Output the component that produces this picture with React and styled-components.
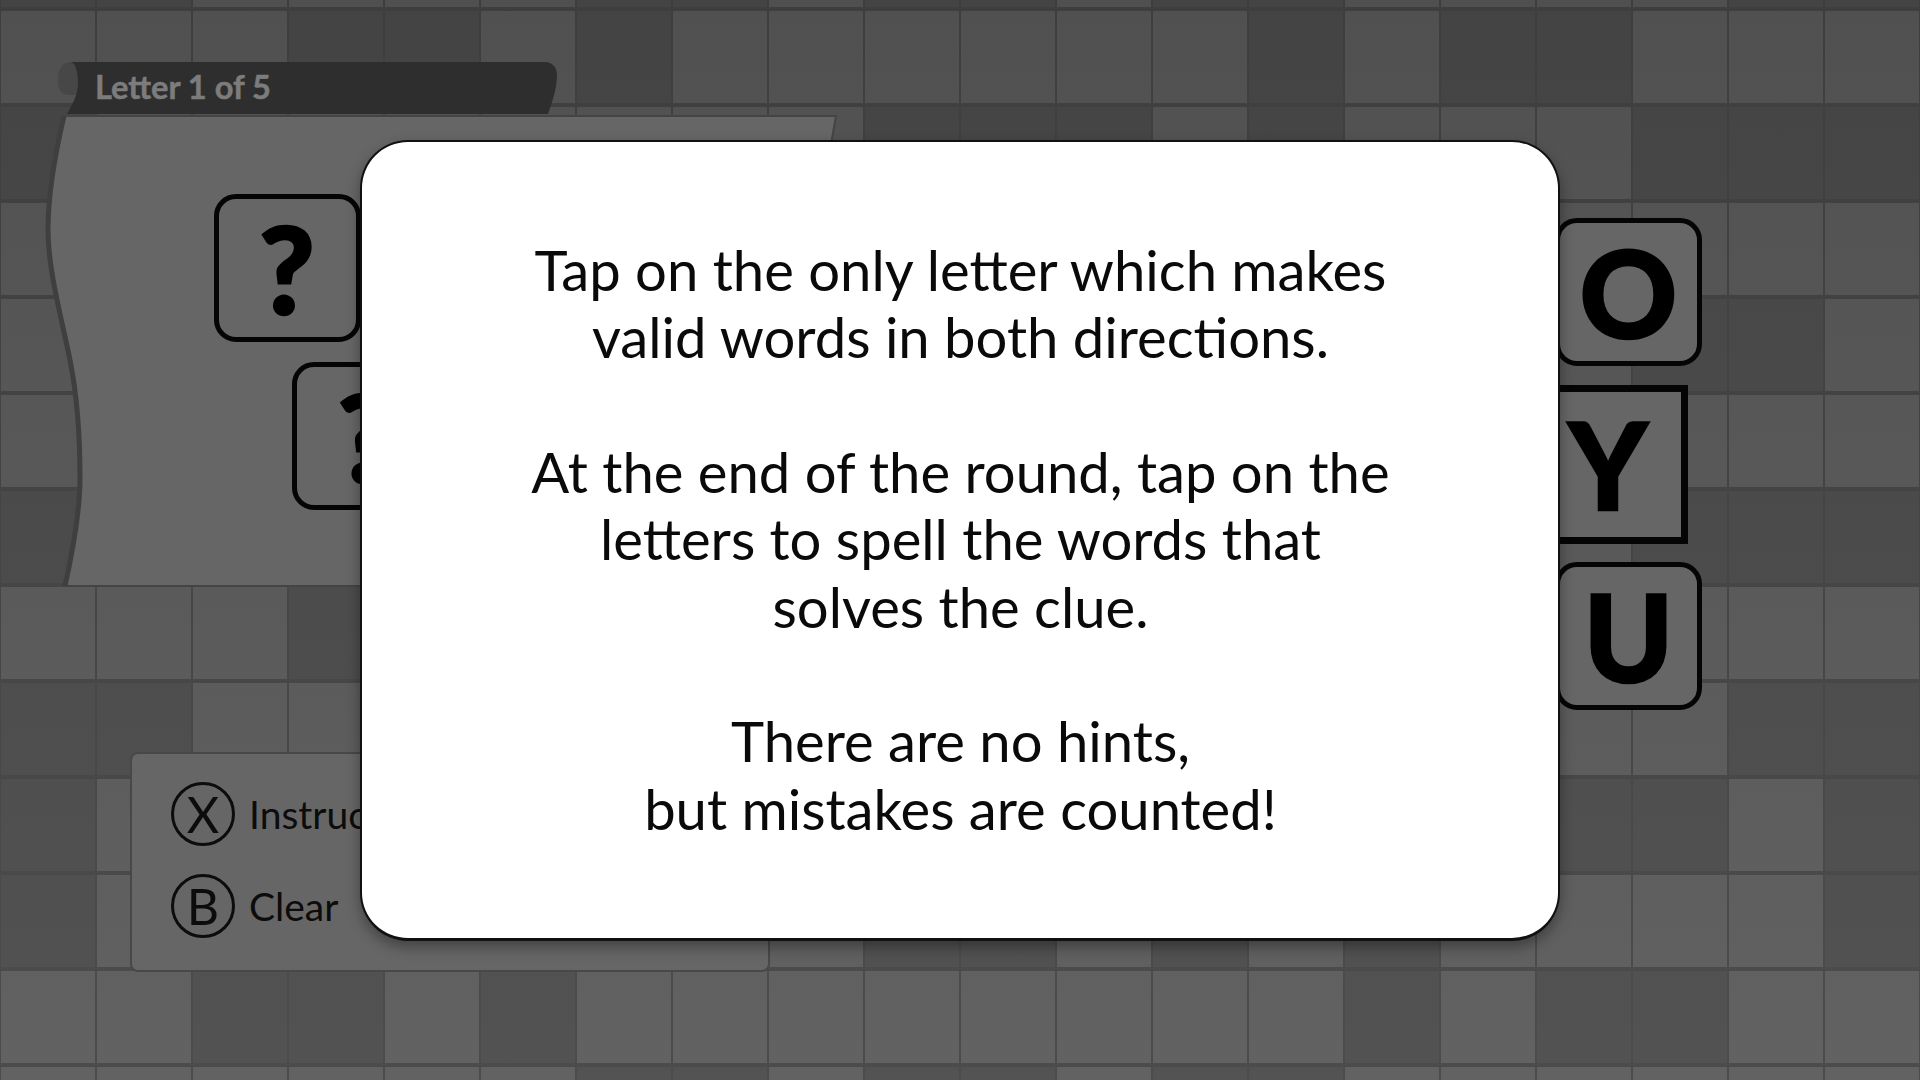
import React from "react";
import styled, { createGlobalStyle } from "styled-components";

const Global = createGlobalStyle`
  html, body { margin: 0; padding: 0; background: #555; }
  body { font-family: Lato, "Liberation Sans", sans-serif; font-variant-ligatures: common-ligatures; }
`;

const Page = styled.div`
  position: relative;
  width: 1920px;
  height: 1080px;
  overflow: hidden;
  background: linear-gradient(#505050, #626262);
`;

const Board = styled.div`
  position: absolute;
  top: -87px;
  left: 0;
  display: grid;
  grid-template-columns: repeat(20, 96px);
  grid-auto-rows: 96px;
`;

const Cell = styled.div`
  box-sizing: border-box;
  border-style: solid;
  border-color: rgba(0, 0, 0, 0.22);
  border-width: 2px 1px 2px 1px;
  background-clip: padding-box;
  background-color: ${(p) => (p.$dark ? "rgba(0,0,0,0.15)" : "transparent")};
`;

const Stage = styled.div`
  position: relative;
  display: flex;
  height: 100%;
`;

const LeftColumn = styled.div`
  display: flex;
  flex-direction: column;
  align-items: flex-start;
  padding: 60px 0 0 40px;
`;

const Scroll = styled.section`
  position: relative;
  box-sizing: border-box;
  width: 800px;
  height: 530px;
`;

const ScrollArt = styled.svg`
  position: absolute;
  inset: 0;
  width: 800px;
  height: 530px;
`;

const ScrollTitle = styled.div`
  position: relative;
  box-sizing: border-box;
  height: 56px;
  padding-left: 55px;
  font-size: 32.6px;
  font-weight: 700;
  line-height: 54px;
  color: #7c7c7c;
  -webkit-text-stroke: 0.5px #7c7c7c;
`;

const TileStack = styled.div`
  position: relative;
  display: flex;
  flex-direction: column;
  align-items: flex-start;
  gap: 20px;
  padding: 78px 0 0 173.5px;
`;

const Tile = styled.div`
  box-sizing: border-box;
  display: flex;
  align-items: center;
  justify-content: center;
  width: 147px;
  height: 148px;
  margin-left: ${(p) => p.$shift || 0}px;
  border: 5px solid #050505;
  border-radius: 22px;
  background: #666;
  color: #000;
  font-size: 120px;
  font-weight: 900;
  line-height: 1;
  -webkit-text-stroke: 2.5px #000;
`;

const SelectedTile = styled(Tile)`
  width: 160px;
  height: 159px;
  border-width: 7px;
  border-radius: 0;
`;

const ControlPanel = styled.div`
  box-sizing: border-box;
  display: flex;
  flex-direction: column;
  gap: 28px;
  width: 640px;
  height: 220px;
  margin: 162px 0 0 90px;
  padding: 28px 0 0 39px;
  border: 2px solid #484848;
  border-radius: 8px;
  background: #666;
`;

const ControlRow = styled.div`
  display: flex;
  align-items: center;
  gap: 14px;
  color: #0c0c0c;
  font-size: 39px;
`;

const Glyph = styled.span`
  box-sizing: border-box;
  display: flex;
  align-items: center;
  justify-content: center;
  width: 64px;
  height: 64px;
  border: 3px solid #0c0c0c;
  border-radius: 50%;
  font-size: 50px;
`;

const RightColumn = styled.div`
  display: flex;
  flex-direction: column;
  align-items: flex-start;
  gap: 18.5px;
  margin-left: auto;
  margin-right: 218px;
  padding-top: 218px;
`;

const Overlay = styled.div`
  position: absolute;
  inset: 0;
  display: flex;
  align-items: center;
  justify-content: center;
  padding-top: 1px;
`;

const Modal = styled.div`
  box-sizing: border-box;
  display: flex;
  align-items: center;
  justify-content: center;
  width: 1200px;
  height: 801px;
  padding-left: 1px;
  border: 2px solid #111;
  border-bottom-width: 3px;
  border-radius: 48px;
  background: #fff;
  box-shadow: 0 6px 14px rgba(0, 0, 0, 0.35);
`;

const ModalText = styled.p`
  margin: 0 0 2px;
  color: #0a0a0a;
  font-size: 56.2px;
  line-height: 67.3px;
  text-align: center;
  white-space: pre-line;
`;

const dark = {
  0: [0, 1, 6, 7, 9, 10, 12, 13, 18, 19],
  1: [3, 4, 6, 13, 15, 16],
  2: [0, 9, 10, 11, 13, 17, 18, 19],
  3: [],
  4: [17, 18],
  5: [],
  6: [0, 17, 18, 19],
  7: [3],
  8: [0, 1, 18, 19],
  9: [0, 16, 17, 19],
  10: [0, 9, 10, 12, 14, 19],
  11: [2, 3, 5, 14, 16, 17],
  12: [6, 7, 9, 10, 12, 13],
};

const cells = [];
Object.keys(dark).forEach((r) => {
  for (let c = 0; c < 20; c += 1) {
    cells.push({ id: `${r}-${c}`, dark: dark[r].includes(c) });
  }
});

const message = `Tap on the only letter which makes
valid words in both directions.

At the end of the round, tap on the
letters to spell the words that
solves the clue.

There are no hints,
but mistakes are counted!`;

const leftEdge =
  "M64 116 C56 150 48 195 48 230 C48 270 62 320 70 360 C78 400 80 440 80 478 C80 510 73 550 65 586";

export default function App() {
  return (
    <Page>
      <Global />
      <Board>
        {cells.map((cell) => (
          <Cell key={cell.id} $dark={cell.dark} />
        ))}
      </Board>
      <Stage>
        <LeftColumn>
          <Scroll>
            <ScrollArt viewBox="40 60 800 530">
              <path
                d={`${leftEdge} L830 586 L830 150 L836 116 Z`}
                fill="#666"
                stroke="#444"
                strokeWidth="2"
              />
              <path d={leftEdge} fill="none" stroke="#3f3f3f" strokeWidth="5" />
              <path
                d="M71 62 C61 62 58 71 58 80 C58 90 61 95 70 95 L78 95 L78 70 Z"
                fill="#474747"
              />
              <path
                d="M71 62 C77 65 78 74 78 85 C77 98 71 106 67 114 L548 114 C552 103 557 88 557 75 C557 67 552 62 545 62 Z"
                fill="#2e2e2e"
              />
            </ScrollArt>
            <ScrollTitle>Letter 1 of 5</ScrollTitle>
            <TileStack>
              <Tile>?</Tile>
              <Tile $shift={78.5}>?</Tile>
            </TileStack>
          </Scroll>
          <ControlPanel>
            <ControlRow>
              <Glyph>X</Glyph>
              Instructions
            </ControlRow>
            <ControlRow>
              <Glyph>B</Glyph>
              Clear
            </ControlRow>
          </ControlPanel>
        </LeftColumn>
        <RightColumn>
          <Tile>O</Tile>
          <SelectedTile $shift={-27}>Y</SelectedTile>
          <Tile>U</Tile>
        </RightColumn>
      </Stage>
      <Overlay>
        <Modal>
          <ModalText>{message}</ModalText>
        </Modal>
      </Overlay>
    </Page>
  );
}
